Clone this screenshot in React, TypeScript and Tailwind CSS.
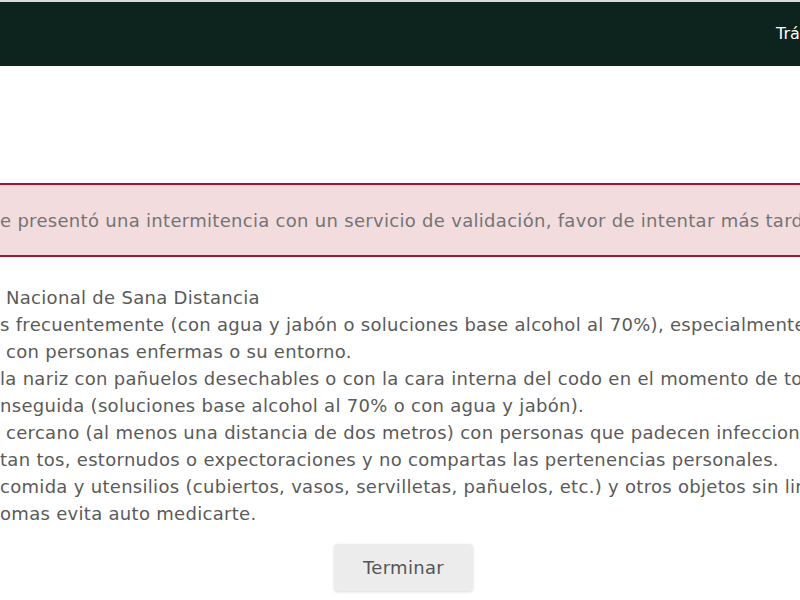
const lines = [
  " Nacional de Sana Distancia",
  "s frecuentemente (con agua y jabón o soluciones base alcohol al 70%), especialmente después",
  " con personas enfermas o su entorno.",
  "la nariz con pañuelos desechables o con la cara interna del codo en el momento de toser",
  "nseguida (soluciones base alcohol al 70% o con agua y jabón).",
  " cercano (al menos una distancia de dos metros) con personas que padecen infecciones",
  "tan tos, estornudos o expectoraciones y no compartas las pertenencias personales.",
  "comida y utensilios (cubiertos, vasos, servilletas, pañuelos, etc.) y otros objetos sin limpiarlos",
  "omas evita auto medicarte.",
];

export default function App() {
  return (
    <div className="h-[600px] w-[800px] overflow-hidden bg-white font-['DejaVu_Sans',sans-serif]">
      <header className="flex h-[66px] items-center border-t-2 border-[#d9dcdb] bg-[#0c231e]">
        <nav className="ml-[776px] whitespace-nowrap text-[16px] font-medium text-white">
          Trámites
        </nav>
      </header>

      <main className="pt-[117px]">
        <div className="flex h-[74px] items-center overflow-hidden whitespace-nowrap border-y-2 border-[#a3162c] bg-[#f2dcde] text-[18px] tracking-[0.3px] text-[#747474]">
          <p>e presentó una intermitencia con un servicio de validación, favor de intentar más tarde.</p>
        </div>

        <div className="mt-[27px] overflow-hidden whitespace-nowrap text-[18px] leading-[27px] tracking-[0.3px] text-[#5a5a5a]">
          {lines.map((line, i) => (
            <p key={i} className="whitespace-pre">
              {line}
            </p>
          ))}
        </div>

        <div className="mt-[17px] flex justify-center pl-[7px]">
          <button
            type="button"
            className="h-[47px] w-[139px] rounded bg-[#ececec] text-[18px] tracking-[0.3px] text-[#555] shadow-[0_1px_3px_rgba(0,0,0,0.15)]"
          >
            Terminar
          </button>
        </div>
      </main>
    </div>
  );
}
